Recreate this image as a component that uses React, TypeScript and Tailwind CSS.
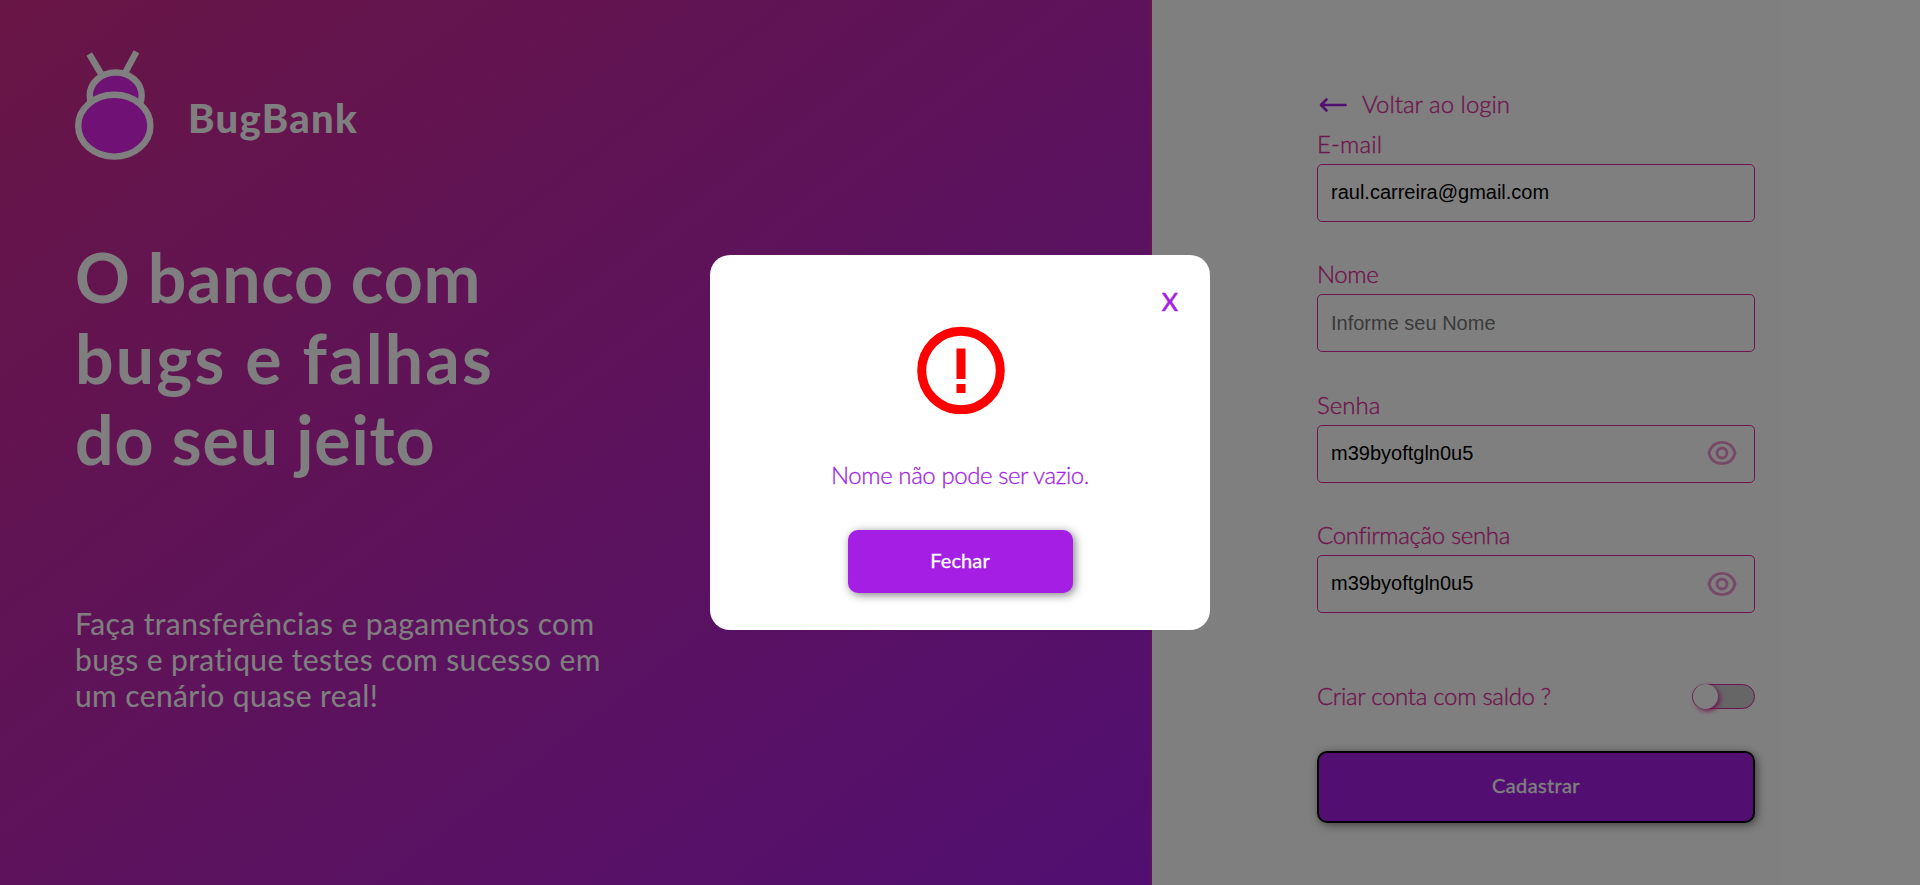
function Eye() {
  return (
    <svg className="-mt-px" width="30" height="26" viewBox="0 0 30 26" fill="none" stroke="#df2a9b" strokeWidth="2.8" opacity="0.5">
      <path d="M1.900 13C4 5.500 9 2.300 15 2.300S26 5.500 28.100 13C26 20.500 21 23.700 15 23.700S4 20.500 1.900 13Z" />
      <circle cx="15" cy="13" r="5" />
    </svg>
  );
}

interface FieldProps {
  label: string;
  value?: string;
  placeholder?: string;
  eye?: boolean;
  labelClass: string;
}

function Field({ label, value, placeholder, eye, labelClass }: FieldProps) {
  return (
    <div className="h-[130.4px]">
      <label className={`block h-[31px] text-[24px] leading-[22px] font-light text-[#df2a9b] [-webkit-text-stroke:0.35px] ${labelClass}`}>{label}</label>
      <div className="flex h-[58px] items-center justify-between rounded-[5px] border border-[#df2a9b] pr-[17px] pl-[13px] font-['Liberation_Sans',sans-serif] text-[20px]">
        <span className={value ? "-mt-[2px] text-black" : "-mt-px text-[#757575]"}>{value ?? placeholder}</span>
        {eye && <Eye />}
      </div>
    </div>
  );
}

export default function App() {
  return (
    <div className="relative flex h-[885px] w-full overflow-hidden bg-white font-['Lato',sans-serif]">
      <section className="flex w-[1152px] flex-col border-r-2 border-transparent bg-[linear-gradient(to_bottom_right,#d12c8b_0%,#a41fe3_100%)] pl-[75px] text-white">
        <div className="mt-[49px] flex h-[112px]">
          <svg width="80" height="112" viewBox="0 0 80 112" fill="#e023ec" stroke="#fff" strokeWidth="6.4">
            <path d="M14.300 5 27 26.500M61.500 2.700 50 24" />
            <ellipse cx="40.700" cy="46.500" rx="26" ry="23" />
            <ellipse cx="39.300" cy="76.700" rx="36.100" ry="30.900" />
          </svg>
          <span className="mt-[45px] ml-[33px] text-[40px] leading-[48px] font-black tracking-[1.3px]">BugBank</span>
        </div>
        <h1 className="mt-[75px] text-[68px] leading-[81px] font-bold">
          <span className="block tracking-[0.65px]">O banco com</span>
          <span className="block tracking-[2.2px]">bugs e falhas</span>
          <span className="block tracking-[0.85px]">do seu jeito</span>
        </h1>
        <p className="mt-[126px] text-[30px] leading-[36px] tracking-[0.39px]">Faça transferências e pagamentos com<br />bugs e pratique testes com sucesso em<br />um cenário quase real!</p>
      </section>
      <section className="w-[768px] pt-[92px] pl-[165px]">
        <div className="w-[438px]">
          <div className="flex h-[41px] text-[24px] leading-[24px] font-light text-[#df2a9b] [-webkit-text-stroke:0.35px]">
            <svg className="mt-[5px] mr-[15px] ml-[2px]" width="28" height="16" viewBox="0 0 28 16" fill="none" stroke="#a41fe3" strokeWidth="2.6" strokeLinecap="round" strokeLinejoin="round"><path d="M26.500 8H2M7.500 2.500 2 8l5.500 5.500" /></svg>
            Voltar ao login
          </div>
          <Field label="E-mail" value="raul.carreira@gmail.com" labelClass="tracking-[0.15px]" />
          <Field label="Nome" placeholder="Informe seu Nome" labelClass="tracking-[-0.4px]" />
          <Field label="Senha" value="m39byoftgln0u5" eye labelClass="" />
          <Field label="Confirmação senha" value="m39byoftgln0u5" eye labelClass="tracking-[-0.35px]" />
          <div className="mt-[29.4px] flex justify-between text-[24px] leading-[23px] font-light text-[#df2a9b]">
            <span className="tracking-[-0.3px] [-webkit-text-stroke:0.35px]">Criar conta com saldo ?</span>
            <div className="h-[25px] w-[63px] rounded-full border border-[#df2a9b] bg-[#ccc]">
              <div className="-mt-px h-[25px] w-[25px] rounded-full bg-white shadow-[2px_2px_5px_#df2a9b]" />
            </div>
          </div>
          <button className="mt-[42px] flex h-[72px] w-[438px] items-center justify-center rounded-[10px] border-2 border-black bg-[#a41fe3] pb-[3px] text-[20px] tracking-[0.35px] text-white shadow-[2px_2px_10px_rgba(0,0,0,0.5)] [-webkit-text-stroke:0.3px]">Cadastrar</button>
        </div>
      </section>
      <div className="absolute inset-0 flex items-center justify-center bg-black/50">
        <div className="flex h-[375px] w-[500px] flex-col items-center rounded-[20px] bg-white">
          <span className="mt-[31px] mr-[32px] self-end text-[25px] leading-[31px] text-[#a41fe3] [-webkit-text-stroke:0.6px]">X</span>
          <svg width="89" height="88" viewBox="0 0 89 88" className="mt-[9px]" fill="red">
            <circle cx="45" cy="44.500" r="39.300" fill="none" stroke="red" strokeWidth="9" />
            <path d="M40.500 22.500h9v30.500h-9zM40.500 58h9v9h-9z" />
          </svg>
          <p className="mt-[47px] text-[24px] leading-[28px] font-light tracking-[-0.42px] text-[#a41fe3] [-webkit-text-stroke:0.3px]">Nome não pode ser vazio.</p>
          <button className="mt-[41px] h-[63px] w-[225px] rounded-[10px] bg-[#a41fe3] pb-[4px] text-[20px] tracking-[0.1px] text-white shadow-[2px_2px_10px_rgba(0,0,0,0.5)] [-webkit-text-stroke:0.3px]">Fechar</button>
        </div>
      </div>
    </div>
  );
}
